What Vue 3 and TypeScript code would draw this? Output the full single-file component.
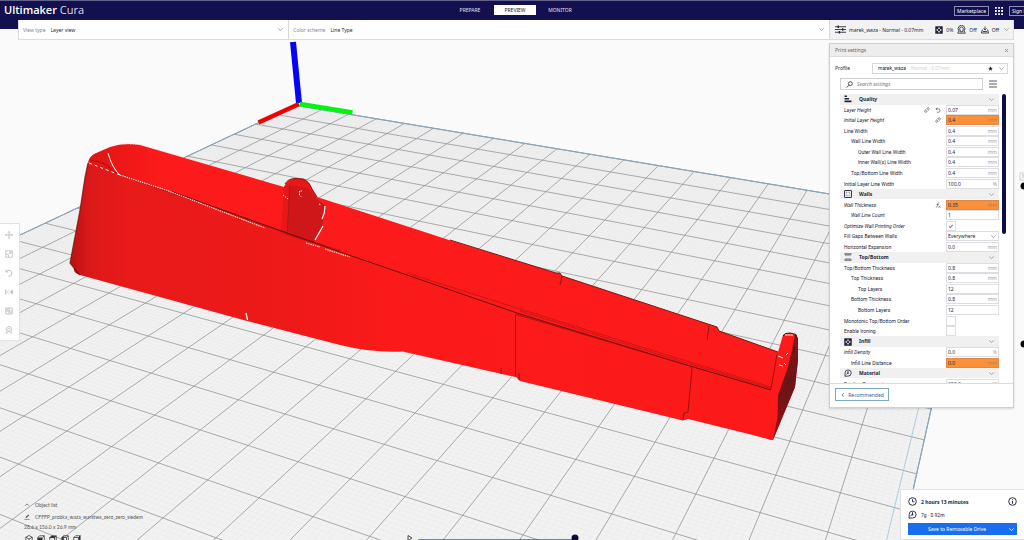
<script setup lang="ts">
import { ref } from 'vue'

interface Setting {
  name: string
  kind?: 'group' | 'check' | 'select'
  icon?: string
  value?: string
  unit?: string
  depth?: number
  changed?: boolean
  warn?: boolean
  marks?: string[]
  checked?: boolean
}

const settings = ref<Setting[]>([
  { name: 'Quality', kind: 'group', icon: 'quality' },
  { name: 'Layer Height', value: '0.07', unit: 'mm', changed: true, marks: ['link', 'reset'] },
  { name: 'Initial Layer Height', value: '0.4', unit: 'mm', changed: true, warn: true, marks: ['link'] },
  { name: 'Line Width', value: '0.4', unit: 'mm' },
  { name: 'Wall Line Width', value: '0.4', unit: 'mm', depth: 1 },
  { name: 'Outer Wall Line Width', value: '0.4', unit: 'mm', depth: 2 },
  { name: 'Inner Wall(s) Line Width', value: '0.4', unit: 'mm', depth: 2 },
  { name: 'Top/Bottom Line Width', value: '0.4', unit: 'mm', depth: 1 },
  { name: 'Initial Layer Line Width', value: '100.0', unit: '%' },
  { name: 'Walls', kind: 'group', icon: 'walls' },
  { name: 'Wall Thickness', value: '0.35', unit: 'mm', changed: true, warn: true, marks: ['fx'] },
  { name: 'Wall Line Count', value: '1', unit: '', depth: 1, changed: true },
  { name: 'Optimize Wall Printing Order', kind: 'check', checked: true, changed: true },
  { name: 'Fill Gaps Between Walls', kind: 'select', value: 'Everywhere' },
  { name: 'Horizontal Expansion', value: '0.0', unit: 'mm' },
  { name: 'Top/Bottom', kind: 'group', icon: 'topbottom' },
  { name: 'Top/Bottom Thickness', value: '0.8', unit: 'mm' },
  { name: 'Top Thickness', value: '0.8', unit: 'mm', depth: 1 },
  { name: 'Top Layers', value: '12', unit: '', depth: 2 },
  { name: 'Bottom Thickness', value: '0.8', unit: 'mm', depth: 1 },
  { name: 'Bottom Layers', value: '12', unit: '', depth: 2 },
  { name: 'Monotonic Top/Bottom Order', kind: 'check' },
  { name: 'Enable Ironing', kind: 'check' },
  { name: 'Infill', kind: 'group', icon: 'infill' },
  { name: 'Infill Density', value: '0.0', unit: '%', changed: true },
  { name: 'Infill Line Distance', value: '0.0', unit: 'mm', depth: 1, warn: true },
  { name: 'Material', kind: 'group', icon: 'spool' },
  { name: 'Printing Temperature', value: '200.0', unit: '°C' },
])

const tools = ['move', 'scale', 'rotate', 'mirror', 'mesh', 'support']
const cameras = ['cube', 'front', 'top', 'left', 'right']

// Perspective projection of a build plate coordinate (one unit per major grid cell).
function project(u: number, v: number): string {
  const d = 1 - 0.02135 * u - 0.0442 * v
  const x = (415 + 41.31 * u - 47.82 * v) / d
  const y = (413 + 5.658 * u + 11.713 * v) / d
  return `${x.toFixed(2)} ${y.toFixed(2)}`
}

const U0 = -12
const U1 = 8
const V0 = -13
const V1 = 7

function gridPath(step: number): string {
  let d = ''
  const n = Math.round(20 / step)
  for (let i = 0; i <= n; i++) {
    d += `M${project(U0 + i * step, V0)}L${project(U0 + i * step, V1)}`
    d += `M${project(U0, V0 + i * step)}L${project(U1, V0 + i * step)}`
  }
  return d
}

const major = gridPath(1)
const minor = gridPath(0.1)
const plate = `M${project(U0, V0)}L${project(U1, V0)}L${project(U1, V1)}L${project(U0, V1)}Z`
const innerEdge = `M${project(7.8, V0)}L${project(7.8, V1)}`
</script>

<template>
  <div class="app">
    <svg width="0" height="0" class="defs" aria-hidden="true">
      <symbol id="i-chevron" viewBox="0 0 8 8"><path d="M1.500 2.800 4 5.200 6.500 2.800" fill="none" stroke="currentColor" /></symbol>
      <symbol id="i-quality" viewBox="0 0 16 16"><path d="M1 1h5v3H1zM1 6h9v3H1zM1 11h14v3.500H1z" fill="currentColor" /></symbol>
      <symbol id="i-walls" viewBox="0 0 16 16"><rect x="1" y="1" width="14" height="14" rx="1" fill="none" stroke="currentColor" stroke-width="1.800" /><rect x="4.500" y="4.500" width="7" height="7" fill="none" stroke="currentColor" stroke-dasharray="1.500 1.500" /></symbol>
      <symbol id="i-topbottom" viewBox="0 0 16 16"><path d="M1 2h14M1 14h14" stroke="currentColor" stroke-width="2" /><path d="M2 5h12M2 11h12" stroke="currentColor" stroke-width="1" opacity=".6" /></symbol>
      <symbol id="i-infill" viewBox="0 0 16 16"><rect x="0.500" y="0.500" width="15" height="15" rx="1" fill="currentColor" /><path d="M8 2.500l2 2-2 2-2-2zM8 9.500l2 2-2 2-2-2zM4.500 6l2 2-2 2-2-2zM11.500 6l2 2-2 2-2-2z" fill="#fff" /></symbol>
      <symbol id="i-spool" viewBox="0 0 16 16"><path d="M2 15V8a6.200 6.200 0 1 1 6 6.300H2" fill="none" stroke="currentColor" stroke-width="1.600" /><circle cx="8" cy="8" r="1.600" fill="currentColor" /><path d="M8 3.500v4M4.500 10.500 8 8" stroke="currentColor" stroke-width="1.400" /></symbol>
      <symbol id="i-link" viewBox="0 0 16 16"><g transform="rotate(-45 8 8)" fill="none" stroke="currentColor" stroke-width="1.600"><path d="M7 5H3.500a3 3 0 0 0 0 6H7M9 5h3.500a3 3 0 0 1 0 6H9M5 8h6" /></g></symbol>
      <symbol id="i-reset" viewBox="0 0 16 16"><path d="M6 1.500 2.500 5 6 8.500M2.500 5H9a4.500 4.500 0 0 1 0 9H5" fill="none" stroke="currentColor" stroke-width="1.700" /></symbol>
      <symbol id="i-fx" viewBox="0 0 16 16"><path d="M11 2C8 1 7.500 3 7 6l-1 5c-.5 3-2 3-4 2.500M4 6.500h6M9.500 10l5 5M14.500 10l-5 5" fill="none" stroke="currentColor" stroke-width="1.500" /></symbol>
      <symbol id="i-sliders" viewBox="0 0 20 16"><path d="M0 3h20M0 8h20M0 13h20" stroke="currentColor" stroke-width="1.600" /><path d="M6 .8v4.400M14 5.800v4.400M8 10.800v4.400" stroke="currentColor" stroke-width="2.600" /></symbol>
      <symbol id="i-supports" viewBox="0 0 16 16"><path d="M3.500 10.500A6 6 0 1 1 12.500 10.500M5.500 9a3.300 3.300 0 1 1 5 0M1 14.500h14M3.500 10.500 1.500 14M12.500 10.500l2 3.500M5.500 9v3h5V9" fill="none" stroke="currentColor" stroke-width="1.500" /></symbol>
      <symbol id="i-adhesion" viewBox="0 0 16 16"><path d="M8 1v6M5 5l3 3 3-3M4 8H2.500L1 14h14l-1.500-6H12M4 11h8" fill="none" stroke="currentColor" stroke-width="1.700" /></symbol>
      <symbol id="i-search" viewBox="0 0 16 16"><circle cx="10" cy="6" r="4.500" fill="none" stroke="currentColor" stroke-width="1.800" /><path d="M7 9.500 1.500 15" stroke="currentColor" stroke-width="2" /></symbol>
      <symbol id="i-clock" viewBox="0 0 16 16"><circle cx="8" cy="8" r="6.800" fill="none" stroke="currentColor" stroke-width="1.700" /><path d="M8 4v4.500h3.500" fill="none" stroke="currentColor" stroke-width="1.600" /></symbol>
      <symbol id="i-info" viewBox="0 0 16 16"><circle cx="8" cy="8" r="6.800" fill="none" stroke="currentColor" stroke-width="1.700" /><path d="M8 7v5M8 4v1.500" stroke="currentColor" stroke-width="1.700" /></symbol>
      <symbol id="i-move" viewBox="0 0 16 16"><path d="M8 1v14M1 8h14M6 3l2-2 2 2M6 13l2 2 2-2M3 6 1 8l2 2M13 6l2 2-2 2" fill="none" stroke="currentColor" stroke-width="1.500" /></symbol>
      <symbol id="i-scale" viewBox="0 0 16 16"><path d="M1.500 1.500h13v13h-13zM1.500 9h5.500v5.500M8 8l4-4M8.500 4H12v3.500" fill="none" stroke="currentColor" stroke-width="1.400" /></symbol>
      <symbol id="i-rotate" viewBox="0 0 16 16"><path d="M2 2v4h4M2.500 6A6 6 0 1 1 7 14.500" fill="none" stroke="currentColor" stroke-width="1.700" /></symbol>
      <symbol id="i-mirror" viewBox="0 0 16 16"><path d="M1 4v8l4.500-4z" fill="none" stroke="currentColor" stroke-width="1.300" /><path d="M15 4v8l-4.500-4z" fill="currentColor" stroke="currentColor" /><path d="M8 2v12" stroke="currentColor" stroke-dasharray="2 1" /></symbol>
      <symbol id="i-mesh" viewBox="0 0 16 16"><path d="M1.500 2h13v12h-13zM8 2v12M1.500 8h13M3 4h3M3 6h3M10 11h3" fill="none" stroke="currentColor" stroke-width="1.500" /></symbol>
      <symbol id="i-support" viewBox="0 0 16 16"><path d="M3.500 9.500A5.500 5.500 0 1 1 12.500 9.500M6 9a2.800 2.800 0 1 1 4 0M1 14h5M10 14h5M3.500 9.500v4M12.500 9.500v4M6 9v2h4V9" fill="none" stroke="currentColor" stroke-width="1.400" /></symbol>
      <symbol id="i-cube" viewBox="0 0 16 16"><path d="M8 1l6.500 3.500v7L8 15l-6.500-3.500v-7zM1.500 4.500 8 8l6.500-3.500M8 8v7" fill="none" stroke="currentColor" stroke-width="1.500" /></symbol>
      <symbol id="i-front" viewBox="0 0 16 16"><path d="M1.500 5 5 1.500h9.500V11L11 14.500H1.500zM11 5l3.500-3.500" fill="none" stroke="currentColor" stroke-width="1.500" /><path d="M1.500 5H11v9.500H1.500z" fill="currentColor" /></symbol>
      <symbol id="i-top" viewBox="0 0 16 16"><path d="M1.500 5H11v9.500H1.500zM11 14.500l3.500-3.500V1.500" fill="none" stroke="currentColor" stroke-width="1.500" /><path d="M1.500 5.500 5 1.500h9.500L11 5.500z" fill="currentColor" stroke="currentColor" /></symbol>
      <symbol id="i-left" viewBox="0 0 16 16"><path d="M5 1.500h9.500V11L11 14.500H1.500M5 5h6v9M11 5l3.500-3.500" fill="none" stroke="currentColor" stroke-width="1.500" /><path d="M1.500 5 5 1.500V11l-3.500 3.500z" fill="currentColor" stroke="currentColor" /></symbol>
      <symbol id="i-right" viewBox="0 0 16 16"><path d="M1.500 5 5 1.500h9.500L11 5H1.500v9.500H11" fill="none" stroke="currentColor" stroke-width="1.500" /><path d="M11 5l3.500-3.500V11L11 14.500z" fill="currentColor" stroke="currentColor" /></symbol>
      <symbol id="i-pencil" viewBox="0 0 16 16"><path d="M4 11l1-3.500L11.500 1 14 3.500 7.500 10z" fill="currentColor" /><path d="M1 14.500h14" stroke="currentColor" stroke-width="1.600" /></symbol>
      <symbol id="i-star" viewBox="0 0 16 16"><path d="M8 1l2.200 4.800 5.100.5-3.800 3.500 1.100 5.200L8 12.300 3.400 15l1.100-5.200L.7 6.300l5.100-.5z" fill="currentColor" /></symbol>
    </svg>

    <svg class="scene" viewBox="0 0 1024 540" preserveAspectRatio="xMidYMid slice" role="img" aria-label="Sliced model on build plate">
      <defs>
        <linearGradient id="body" x1="0" x2="1"><stop offset="0" stop-color="#b91212" /><stop offset=".03" stop-color="#dd1919" /><stop offset=".08" stop-color="#e81a1a" /><stop offset=".3" stop-color="#ee1919" /><stop offset=".46" stop-color="#fb1a1a" /><stop offset="1" stop-color="#fd1919" /></linearGradient>
        <linearGradient id="inside" x1="0" x2="1"><stop offset="0" stop-color="#df1515" /><stop offset=".1" stop-color="#fc1a1a" /><stop offset="1" stop-color="#fd1a1a" /></linearGradient>
        <linearGradient id="side" x1="0" y1="0" x2="0" y2="1"><stop offset="0" stop-color="#8c1515" /><stop offset=".45" stop-color="#691416" /><stop offset="1" stop-color="#951112" /></linearGradient>
      </defs>
      <path :d="plate" fill="#f2f2f2" stroke="#9fb8c6" stroke-width="1" />
      <path :d="minor" fill="none" stroke="#e5e6e8" stroke-width=".35" />
      <path :d="major" fill="none" stroke="#8f9193" stroke-width=".75" />
      <path :d="innerEdge" fill="none" stroke="#9cc5df" stroke-width=".8" />
      <path :d="plate" fill="none" stroke="#86a6ba" stroke-width=".9" />

      <path d="M293 42 299 103" stroke="#0505f5" stroke-width="6" />
      <path d="M299 104 258.500 122.500" stroke="#f00000" stroke-width="4.500" />
      <path d="M300 104 352.500 112.500" stroke="#00f510" stroke-width="4.500" />

      <path fill="url(#inside)" d="M88 164Q88 158 94 154L110 147Q124 142 140 145L284 187Q287 179 295 178.500L303 179Q309 181 312 189L317 197 449 240 556 273H560L562 276 677 314 717 327 719 331 778 352 783 335Q785 332.500 790 333L796 334.500 798 339V360L795 387 773 440H771L400 330 100 190Z" />
      <path fill="url(#body)" d="M88 163 120 175 166 190 340 254 407 275 520 314 680 363 771 389 780 392 773 440 688 419 683 420.500 520 381 516 377 410 353 403 351.500Q372 353 340 345L247 321 80 275Q73 273 74 268L70 263 80 210 85 177Z" />
      <path d="M364 280Q392 310 404 352L516 377V314L407 275Z" fill="#fc1919" opacity=".5" />

      <path d="M284 187 281 234 301 240Q318 236 324 214L325 206 316 198 312 189Q309 181 303 179L295 178.500Q287 179 284 187Z" fill="#e81818" />
      <path d="M289 185 287 235 313 243Q323 232 324 214L325 206 316 198 308 188Z" fill="#cf1719" />
      <path d="M290 186 287 235" stroke="#a81616" stroke-width=".8" />
      <path d="M285 184Q288 178.500 295 178.500L303 179Q309 181 312 189L317 197" fill="none" stroke="#821010" stroke-width=".9" />
      <path d="M91 161Q102 159 114 172L130 178 166 191 280 231 340 251" fill="none" stroke="#9d1212" stroke-width="1.600" opacity=".55" />
      <path d="M170 191 340 252 407 275 520 314 680 363 771 390" fill="none" stroke="#6e1010" stroke-width="1" />
      <path d="M407 273 520 309 680 359 771 387M520 311 680 361 771 388.500" fill="none" stroke="#8c1010" stroke-width=".6" stroke-dasharray="2 .6" />
      <path d="M120 175 166 190 265 228M306 243 320 247M325 249 350 257" fill="none" stroke="#ffd0c8" stroke-width="1.200" stroke-dasharray="1.500 .8" />
      <path d="M89 163 120 175" fill="none" stroke="#fff" stroke-width="1" stroke-dasharray="3 3" />
      <path d="M108 153Q112 168 120 175" fill="none" stroke="#fff" stroke-width="1" />
      <path d="M325 206Q325 213 322 219M323 226 315 240M246 313 247.500 320" fill="none" stroke="#fff" stroke-width="1.200" />
      <path d="M283 195 288 199M319 204 321 205M302 191h-2.500v4l2 2" fill="none" stroke="#fff" stroke-width=".9" stroke-dasharray="1.500 1" />
      <path d="M125 144 140 144.500 200 162" fill="none" stroke="#f8b3b0" stroke-width=".8" stroke-dasharray="1 1.500" />
      <path d="M88 163 85 177 80 210 70 263 74 268 80 275" fill="none" stroke="#6a0c0c" stroke-width="1.200" opacity=".7" />
      <path d="M450 240 556 273H560L562 276 717 327 719 331 778 352" fill="none" stroke="#801010" stroke-width="1" />
      <path d="M562 276 560 285M709 326 707 340M515.500 315V376M519 373V380M501 368V374M692 369 688 412 684 413 683 420M771 389 777 354" fill="none" stroke="#8e1010" stroke-width=".9" />
      <path d="M515 314 690 366 692 369" fill="none" stroke="#8e1010" stroke-width=".8" />

      <path d="M795 334 798 338.500V360L795 387 773 440 777.500 417 778 395 787 370 792 350Z" fill="url(#side)" />
      <path d="M783 336Q785 332.500 790 333L796 334.500 797 338" fill="none" stroke="#421010" stroke-width="1" />
      <path d="M785 335h8M778 356l5 2M786 355l2-2M779 365l4 1M784 363l2 2" stroke="#fff" stroke-width=".9" />
      <path d="M793 353q2-3 1-6" stroke="#351010" stroke-width=".9" fill="none" />
    </svg>

    <header class="top">
      <h1 class="brand"><b>Ultimaker</b> Cura</h1>
      <nav class="stages" aria-label="Stages">
        <button type="button">PREPARE</button>
        <button type="button" class="on">PREVIEW</button>
        <button type="button">MONITOR</button>
      </nav>
      <div class="account">
        <button type="button" class="outline">Marketplace</button>
        <button type="button" class="bare" aria-label="Applications">
          <svg width="8" height="8" viewBox="0 0 9 9"><path d="M0 1h9M0 4.500h9M0 8h9" stroke="#fff" stroke-width="2" stroke-dasharray="2 1.500" /></svg>
        </button>
        <button type="button" class="outline sign">Sign in</button>
      </div>
    </header>

    <section class="bar">
      <div class="cell view">
        <label for="view">View type</label>
        <select id="view"><option>Layer view</option></select>
        <svg width="7" height="7" class="muted"><use href="#i-chevron" /></svg>
      </div>
      <div class="cell scheme">
        <label for="scheme">Color scheme</label>
        <select id="scheme"><option>Line Type</option></select>
        <svg width="7" height="7" class="muted"><use href="#i-chevron" /></svg>
      </div>
      <button type="button" class="cell summary">
        <svg width="11" height="9"><use href="#i-sliders" /></svg>
        <span class="grow">marek_waza - Normal - 0.07mm</span>
        <svg width="8" height="8"><use href="#i-infill" /></svg><span>0%</span>
        <svg width="9" height="9" class="gap"><use href="#i-supports" /></svg><span>Off</span>
        <svg width="8" height="8" class="gap"><use href="#i-adhesion" /></svg><span>Off</span>
        <svg width="7" height="7" class="muted last"><use href="#i-chevron" /></svg>
      </button>
    </section>

    <aside class="panel">
      <div class="panel-head">
        <h2>Print settings</h2>
        <button type="button" class="bare" aria-label="Close"><svg width="5" height="5" viewBox="0 0 5 5"><path d="M1 1l3 3M4 1 1 4" stroke="#777" stroke-width=".7" /></svg></button>
      </div>
      <div class="profile">
        <span>Profile</span>
        <button type="button" class="profile-box">
          <span>marek_waza</span><span class="ghost">Normal - 0.07mm</span>
          <svg width="5" height="5"><use href="#i-star" /></svg>
          <svg width="7" height="7" class="muted"><use href="#i-chevron" /></svg>
        </button>
      </div>
      <div class="search">
        <div class="search-box">
          <svg width="7" height="7"><use href="#i-search" /></svg>
          <input type="text" placeholder="Search settings" aria-label="Search settings" />
        </div>
        <button type="button" class="bare" aria-label="Setting visibility"><svg width="8" height="8" viewBox="0 0 8 8"><path d="M0 1h8M0 4h8M0 7h8" stroke="#333" stroke-width=".8" /></svg></button>
      </div>
      <div class="list">
        <div class="rows">
          <template v-for="(s, i) in settings" :key="s.name">
            <button v-if="s.kind === 'group'" type="button" class="group">
              <svg width="8" height="8"><use :href="'#i-' + s.icon" /></svg>
              <span>{{ s.name }}</span>
              <svg width="7" height="7" class="muted"><use href="#i-chevron" /></svg>
            </button>
            <div v-else class="row" :class="{ changed: s.changed }">
              <label :for="'s' + i" :class="'depth' + (s.depth ?? 0)">{{ s.name }}</label>
              <svg v-for="m in s.marks" :key="m" width="6" height="6" class="mark"><use :href="'#i-' + m" /></svg>
              <div v-if="s.kind === 'check'" class="tick">
                <input :id="'s' + i" v-model="s.checked" type="checkbox" />
              </div>
              <div v-else-if="s.kind === 'select'" class="field">
                <select :id="'s' + i"><option>{{ s.value }}</option></select>
                <svg width="7" height="7" class="muted"><use href="#i-chevron" /></svg>
              </div>
              <div v-else class="field" :class="{ warn: s.warn }">
                <input :id="'s' + i" v-model="s.value" type="text" />
                <span class="unit">{{ s.unit }}</span>
              </div>
            </div>
          </template>
        </div>
        <div class="track"><div class="thumb"></div></div>
      </div>
      <div class="panel-foot">
        <button type="button"><svg width="6" height="6" viewBox="0 0 8 8"><path d="M5 1.500 2.500 4 5 6.500" fill="none" stroke="currentColor" /></svg>Recommended</button>
      </div>
    </aside>

    <nav class="tools" aria-label="Tools">
      <button v-for="t in tools" :key="t" type="button" :aria-label="t"><svg width="8" height="8"><use :href="'#i-' + t" /></svg></button>
    </nav>

    <div class="objects">
      <button type="button" class="obj"><svg width="6" height="6" viewBox="0 0 8 8"><path d="M1.500 5 4 2.500 6.500 5" fill="none" stroke="currentColor" /></svg>Object list</button>
      <button type="button" class="obj"><svg width="6" height="6"><use href="#i-pencil" /></svg>CFFFP_probka_waza_warstwa_zero_zero_siedem</button>
      <p>28.6 x 156.0 x 26.9 mm</p>
      <div class="cameras">
        <button v-for="c in cameras" :key="c" type="button" class="bare" :aria-label="c"><svg width="8" height="8"><use :href="'#i-' + c" /></svg></button>
      </div>
    </div>

    <svg class="path-slider" width="172" height="8" viewBox="0 0 172 8" aria-hidden="true">
      <path d="M1 2.500 5 5 1 7.500z" fill="none" stroke="#222" stroke-width=".8" />
      <path d="M11 7h155" stroke="#10104c" stroke-width="1" />
      <circle cx="168" cy="5" r="3.500" fill="#08083a" />
    </svg>

    <svg class="layer-slider" width="6" height="180" viewBox="0 0 6 180" aria-hidden="true">
      <rect x="2" y="2" width="6" height="7" fill="#f8f8f8" stroke="#bbb" stroke-width=".6" />
      <path d="M4 4h2M4 6h2" stroke="#999" stroke-width=".6" />
      <circle cx="6" cy="15" r="3.500" fill="#050508" />
      <circle cx="6" cy="173" r="3.500" fill="#050508" />
    </svg>

    <section class="job">
      <div class="line time"><svg width="9" height="9"><use href="#i-clock" /></svg><b>2 hours 13 minutes</b><svg width="9" height="9"><use href="#i-info" /></svg></div>
      <div class="line"><svg width="9" height="9"><use href="#i-spool" /></svg><span class="small">7g · 0.92m</span></div>
      <div class="save"><button type="button" class="main">Save to Removable Drive</button><button type="button" aria-label="More outputs"><svg width="7" height="7"><use href="#i-chevron" /></svg></button></div>
    </section>
  </div>
</template>

<style>
html, body { height: 100%; overflow: hidden; }
</style>

<style scoped>
.app {
  position: relative;
  height: 100vh;
  overflow: hidden;
  background: #fafafa;
  color: #25253a;
  font: 5px/8px "Noto Sans", "Open Sans", sans-serif;
}
.app *, .app *::before { box-sizing: border-box; }
button, input, select { font: inherit; color: inherit; margin: 0; padding: 0; border: 0; background: none; border-radius: 0; appearance: none; outline: 0; min-width: 0; }
svg { flex: none; display: block; }
.defs { position: absolute; }
.scene { position: absolute; inset: 0; width: 100%; height: 100%; }
.muted { color: #999; }

.top { position: relative; display: flex; justify-content: flex-end; height: 29px; padding-bottom: 9px; background: #13104f; border-top: 1px solid #62618c; color: #fff; }
.brand { position: absolute; left: 4px; top: 1px; margin: 0; font-family: "Open Sans", sans-serif; font-size: 11px; line-height: 15px; font-weight: 400; color: #dcdcec; }
.brand b { font-weight: 600; color: #fff; }
.stages { position: absolute; left: 6px; right: 0; top: 4px; display: flex; justify-content: center; gap: 3px; }
.stages button { width: 42px; height: 10px; line-height: 10px; color: #e4e4f2; }
.stages .on { background: #fff; color: #13104f; }
.account { display: flex; align-items: center; gap: 6px; position: relative; margin-right: -9px; }
.outline { height: 10px; padding: 0 2px; line-height: 8px; border: 1px solid #8d8cb5; white-space: nowrap; }
.sign { width: 24px; text-align: left; }

.bar { position: relative; display: flex; height: 20px; margin: -9px 10px 0 18px; background: #fff; border: 1px solid #dcdce0; border-top: 0; }
.cell { display: flex; align-items: center; padding: 0 4px; }
.view { width: 27.200%; border-right: 1px solid #d8d8da; }
.scheme { flex: 1; }
.cell label { color: #858590; }
.cell select { flex: 1; margin-left: 5px; }
.summary { width: 184px; background: #f2f2f3; border-left: 1px solid #d8d8da; padding: 0 3px 0 5px; text-align: left; }
.summary .grow { flex: 1; margin-left: 3px; }
.summary span { margin-left: 3px; }
.summary .gap { margin-left: 4px; }
.summary .last { margin-left: 4px; }

.panel { position: absolute; right: 10px; top: 43px; width: 185px; background: #fff; border: 1px solid #cfcfd2; box-shadow: 0 1px 2px rgba(0, 0, 0, .15); }
.panel-head { display: flex; align-items: center; justify-content: space-between; height: 13px; padding: 0 4px 0 5px; background: #ededee; border-bottom: 1px solid #dedee0; }
.panel-head h2 { margin: 0; font: inherit; color: #666; }
.profile { display: flex; align-items: center; justify-content: space-between; height: 20px; padding: 2px 5px 0 5px; }
.profile-box { display: flex; align-items: center; width: 136px; height: 11px; padding: 0 2px 0 5px; gap: 5px; border: 1px solid #d6d6dc; text-align: left; }
.profile-box, .small { font-family: Roboto, sans-serif; }
.ghost { flex: 1; color: #d4d4da; }
.search { display: flex; align-items: center; gap: 6px; padding: 0 0 0 10px; height: 14px; }
.search-box { display: flex; align-items: center; width: 143px; height: 12px; padding: 0 5px; gap: 4px; border: 1px solid #cfcfd6; }
.search-box input { flex: 1; height: 9px; }
.search-box input::placeholder { color: #777; font-style: italic; opacity: 1; }
.list { display: flex; justify-content: space-between; height: 293px; padding: 3px 7px 0 10px; overflow: hidden; border-bottom: 1px solid #dcdce0; }
.rows { display: grid; grid-auto-rows: 1fr; width: 159px; height: 295px; font-family: Roboto, "Noto Sans", sans-serif; }
.track { width: 4px; }
.thumb { width: 4px; height: 140px; border-radius: 2px; background: #0d0b4b; }
.group { display: flex; align-items: center; padding: 0 4px; background: #f0f0f0; text-align: left; font-family: "Noto Sans", sans-serif; font-weight: 700; }
.group span { flex: 1; margin-left: 7px; line-height: 9px; }
.row { display: flex; align-items: center; gap: 5px; }
.row label { flex: 1; white-space: nowrap; padding-left: 4px; }
.row.changed label { font-style: italic; }
.row .depth1 { padding-left: 11px; }
.row .depth2 { padding-left: 18px; }
.mark { color: #444; }
.field { display: flex; align-items: center; width: 53px; height: 10px; padding: 0 1px; background: #fff; border: 1px solid #dedee2; }
.field input, .field select { flex: 1; width: 20px; height: 8px; line-height: 8px; font-family: "Noto Sans", sans-serif; }
.unit { color: #a0a0a8; font-family: "Noto Sans", sans-serif; }
.warn { background: #fc9039; border-color: #d98a4a; }
.warn .unit { color: #c77a3c; }
.tick { width: 53px; display: flex; }
.tick input { width: 10px; height: 10px; border: 1px solid #dedee2; background: #fff; display: grid; place-items: center; }
.tick input:checked::before { content: ""; width: 4px; height: 2px; border: solid #777; border-width: 0 0 1px 1px; transform: rotate(-45deg); }
.panel-foot { padding: 4px 5px 6px; }
.panel-foot button { display: flex; align-items: center; justify-content: center; gap: 2px; width: 54px; height: 13px; border: 1px solid #7fa6c4; color: #2a6496; }

.tools { position: absolute; left: 0; top: 223px; width: 20px; padding: 1px 0; background: #fff; border: 1px solid #e2e2e4; border-left: 0; }
.tools button { display: grid; place-items: center; width: 18px; height: 19px; color: #b5b5bd; }

.objects { position: absolute; left: 24px; bottom: -3px; color: #555; }
.obj { display: flex; align-items: center; gap: 5px; height: 12px; white-space: nowrap; }
.obj, .objects p { font-family: Lato, sans-serif; }
.objects p { margin: 0 0 4px; }
.cameras { display: flex; gap: 4px; color: #333; margin-left: 1px; }
.path-slider { position: absolute; left: 407px; bottom: -1px; }
.layer-slider { position: absolute; right: 0; top: 171px; }

.job { position: absolute; right: 0; bottom: 0; width: 124px; padding: 5px 7px 4px 7px; background: #fff; border: 1px solid #e2e2e4; border-right: 0; }
.line { display: flex; align-items: center; gap: 4px; height: 13px; }
.line b { flex: 1; }
.save { display: flex; margin-top: 2px; height: 12px; background: #196ef0; color: #fff; }
.save button { padding: 0 2px; line-height: 12px; }
.save .main { flex: 1; }
</style>
